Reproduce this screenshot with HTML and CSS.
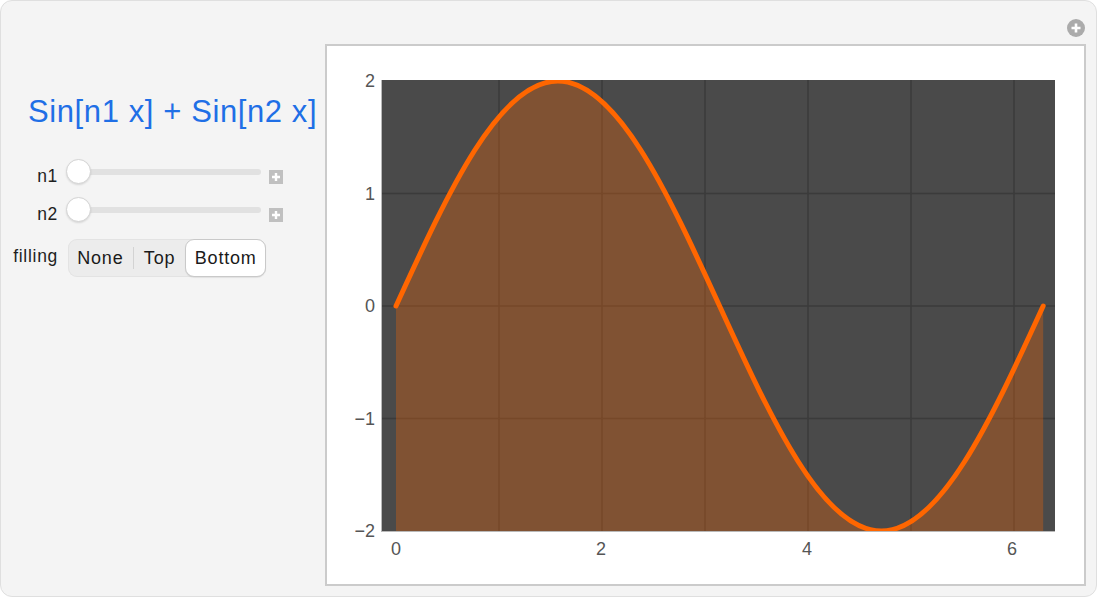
FILE: index.html
```html
<!DOCTYPE html>
<html>
<head>
<meta charset="utf-8">
<link rel="stylesheet" href="styles.css">
</head>
<body>
<div class="panel">
  <div class="controls">
    <div class="title">Sin[n1 x] + Sin[n2 x]</div>
    <div class="rows">
      <div class="label">n1</div>
      <div class="slider">
        <div class="track"><span class="thumb"></span></div>
        <span class="plusbox"><svg width="14" height="14" viewBox="0 0 14 14"><path d="M7 3V11M3 7H11" stroke="#fff" stroke-width="2.4"/></svg></span>
      </div>
      <div class="label">n2</div>
      <div class="slider">
        <div class="track"><span class="thumb"></span></div>
        <span class="plusbox"><svg width="14" height="14" viewBox="0 0 14 14"><path d="M7 3V11M3 7H11" stroke="#fff" stroke-width="2.4"/></svg></span>
      </div>
      <div class="label r3">filling</div>
      <div class="seg r3">
        <span class="opt none">None</span><span class="sep"></span><span class="opt top">Top</span><span class="opt bottom">Bottom</span>
      </div>
    </div>
  </div>
  <div class="frame">
    <svg width="757" height="538" viewBox="327 46 757 538">
      <defs>
        <clipPath id="plotclip"><rect x="382" y="80" width="673" height="451"/></clipPath>
      </defs>
      <rect x="382" y="80" width="673" height="451" fill="#4a4a4a"/>
      <g stroke="#3b3b3b" stroke-width="1.5">
        <line x1="499" y1="80" x2="499" y2="531"/>
        <line x1="602" y1="80" x2="602" y2="531"/>
        <line x1="705" y1="80" x2="705" y2="531"/>
        <line x1="808" y1="80" x2="808" y2="531"/>
        <line x1="911" y1="80" x2="911" y2="531"/>
        <line x1="1014" y1="80" x2="1014" y2="531"/>
        <line x1="382" y1="193.5" x2="1055" y2="193.5"/>
        <line x1="382" y1="306" x2="1055" y2="306"/>
        <line x1="382" y1="418.5" x2="1055" y2="418.5"/>
      </g>
      <g clip-path="url(#plotclip)">
        <path fill="#ff6600" fill-opacity="0.3" d="M396 306 C448.77 190.73 499.24 81 557.79 81 C616.35 81 666.81 190.73 719.58 306 C772.35 421.27 822.82 531 881.38 531 C939.94 531 990.40 421.27 1043.17 306 L1043.17 531 L396 531 Z"/>
        <path fill="none" stroke="#ff6600" stroke-width="5" stroke-linecap="round" d="M396 306 C448.77 190.73 499.24 81 557.79 81 C616.35 81 666.81 190.73 719.58 306 C772.35 421.27 822.82 531 881.38 531 C939.94 531 990.40 421.27 1043.17 306"/>
      </g>
      <g stroke="#b9b9b9" stroke-width="1">
        <line x1="382" y1="531.5" x2="1055" y2="531.5"/>
        <line x1="381.5" y1="80" x2="381.5" y2="532"/>
      </g>
      <g class="ticks" text-anchor="end">
        <text x="375" y="81" dy="0.36em">2</text>
        <text x="375" y="193.5" dy="0.36em">1</text>
        <text x="375" y="306" dy="0.36em">0</text>
        <text x="375" y="418.5" dy="0.36em">−1</text>
        <text x="375" y="531" dy="0.36em">−2</text>
      </g>
      <g class="ticks" text-anchor="middle">
        <text x="396" y="549" dy="0.36em">0</text>
        <text x="601" y="549" dy="0.36em">2</text>
        <text x="807" y="549" dy="0.36em">4</text>
        <text x="1012" y="549" dy="0.36em">6</text>
      </g>
    </svg>
  </div>
  <span class="corner-plus"><svg width="18" height="18" viewBox="0 0 18 18"><circle cx="9" cy="9" r="9" fill="#ababab"/><path d="M9 4.5V13.5M4.5 9H13.5" stroke="#fff" stroke-width="2.6"/></svg></span>
</div>
</body>
</html>
```
FILE: styles.css
```css
html, body {
  margin: 0;
  padding: 0;
  background: #ffffff;
}

body {
  font-family: "Liberation Sans", Arial, sans-serif;
  color: #1e1e1e;
}

.panel {
  position: relative;
  display: flex;
  box-sizing: border-box;
  width: 1097px;
  height: 597px;
  background: #f4f4f4;
  border: 1px solid #dfdfdf;
  border-radius: 12px;
}

.controls {
  width: 324px;
  flex: none;
  padding-top: 93px;
  box-sizing: border-box;
}

.title {
  font-size: 31px;
  line-height: 36px;
  letter-spacing: 0.6px;
  color: #1f6fe6;
  padding-left: 27px;
  white-space: nowrap;
}

.rows {
  display: grid;
  grid-template-columns: 57px auto;
  grid-template-rows: 26px 26px 38px;
  column-gap: 10px;
  row-gap: 12px;
  margin-top: 29px;
}

.label {
  align-self: center;
  text-align: right;
  font-size: 17.5px;
  letter-spacing: 0.7px;
  color: #1e1e1e;
  padding-top: 8px;
}

.label.r3 {
  padding-top: 0;
}

.r3 {
  margin-top: 4px;
}

.slider {
  display: flex;
  align-items: center;
}

.track {
  position: relative;
  width: 193px;
  height: 6px;
  border-radius: 3px;
  background: #e1e1e1;
}

.thumb {
  position: absolute;
  left: -2px;
  top: -10px;
  width: 25px;
  height: 25px;
  box-sizing: border-box;
  border-radius: 50%;
  background: #ffffff;
  border: 1px solid #d4d4d4;
  box-shadow: 0 1px 2px rgba(0, 0, 0, 0.12);
}

.plusbox {
  display: block;
  width: 14px;
  height: 14px;
  margin-left: 8px;
  margin-top: 10px;
  background: #c0c0c0;
}

.plusbox svg {
  display: block;
}

.seg {
  display: flex;
  align-items: center;
  width: 198px;
  height: 38px;
  box-sizing: border-box;
  background: #ececec;
  border-radius: 9px;
  box-shadow: inset 0 0 0 1px #e3e3e3;
}

.opt {
  display: flex;
  align-items: center;
  justify-content: center;
  height: 100%;
  box-sizing: border-box;
  font-size: 18px;
  letter-spacing: 0.8px;
  color: #1a1a1a;
  padding-top: 1px;
}

.none { width: 65px; }
.top { width: 52px; }

.bottom {
  width: 81px;
  background: #ffffff;
  border: 1px solid #c9c9c9;
  border-radius: 9px;
  box-shadow: 0 1px 1px rgba(0, 0, 0, 0.08);
}

.sep {
  width: 1px;
  height: 22px;
  background: #d3d3d3;
}

.frame {
  flex: none;
  margin-top: 43px;
  width: 761px;
  height: 542px;
  box-sizing: border-box;
  border: 2px solid #cbcbcb;
  background: #ffffff;
}

.frame svg {
  display: block;
}

.ticks text {
  font-family: "Liberation Sans", Arial, sans-serif;
  font-size: 18px;
  fill: #555555;
}

.corner-plus {
  position: absolute;
  left: 1066px;
  top: 18px;
  width: 18px;
  height: 18px;
}

.corner-plus svg {
  display: block;
}
```
